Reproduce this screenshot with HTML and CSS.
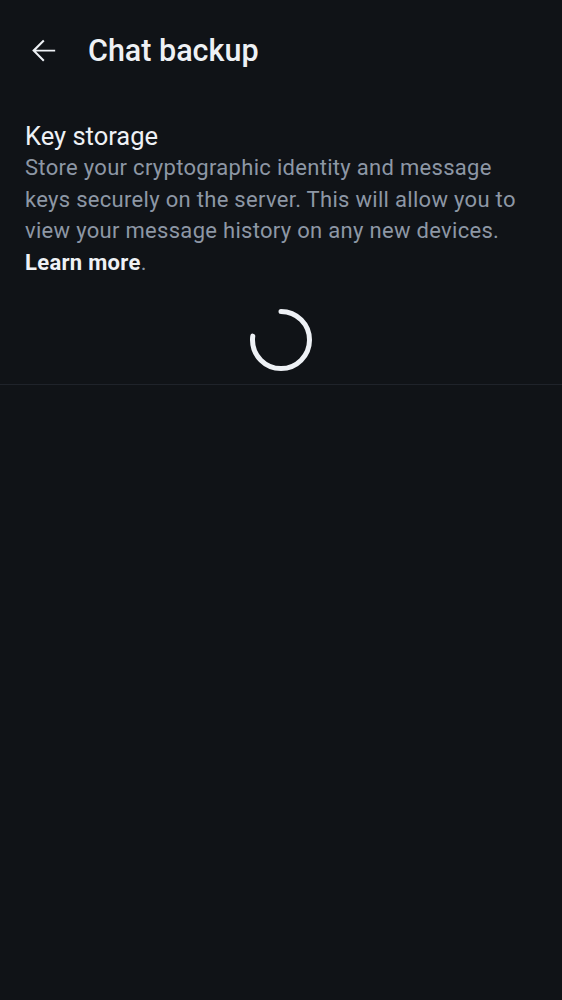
FILE: index.html
```html
<!DOCTYPE html>
<html>
<head>
<meta charset="utf-8">
<link rel="stylesheet" href="styles.css">
</head>
<body>
<div class="app">
  <header class="topbar">
    <button class="back" aria-label="Back">
      <svg width="35" height="35" viewBox="0 0 24 24"><path d="M20 11.4H6.9l5.8-5.8-.98-.98L4.24 12l7.48 7.48.98-.98-5.8-5.8H20v-1.3z" fill="#eef1f5"/></svg>
    </button>
    <h1 class="title">Chat backup</h1>
  </header>
  <section class="section">
    <h2 class="heading">Key storage</h2>
    <p class="desc">Store your cryptographic identity and message keys securely on the server. This will allow you to view your message history on any new devices. <a class="link">Learn more</a>.</p>
    <div class="spinner-row">
      <svg class="spinner" width="68" height="68" viewBox="0 0 68 68">
        <circle cx="34" cy="34" r="28.5" fill="none" stroke="#eef1f5" stroke-width="5" stroke-linecap="round" stroke-dasharray="138 200" transform="rotate(-90 34 34)"/>
      </svg>
    </div>
  </section>
  <div class="divider"></div>
</div>
</body>
</html>
```
FILE: styles.css
```css
html, body {
  margin: 0;
  padding: 0;
  background: #101317;
}
body {
  font-family: Roboto, "Noto Sans", sans-serif;
  color: #eef1f5;
  width: 562px;
  height: 1000px;
}
.topbar {
  display: flex;
  align-items: center;
  height: 100px;
  padding-left: 26px;
}
.back {
  background: none;
  border: 0;
  padding: 0;
  width: 35px;
  height: 35px;
  display: flex;
  align-items: center;
  justify-content: center;
  margin-right: 27px;
}
.title {
  margin: 0;
  font-size: 30.5px;
  font-weight: 500;
  letter-spacing: 0;
  color: #eef1f5;
}
.section {
  padding: 20px 37px 0 25px;
}
.heading {
  margin: 0;
  font-size: 25.5px;
  font-weight: 400;
  line-height: 32px;
  color: #eef1f5;
}
.desc {
  margin: 0;
  font-size: 22px;
  line-height: 31.5px;
  color: #8d97a5;
  letter-spacing: 0.3px;
}
.link {
  color: #eef1f5;
  font-weight: 700;
}
.spinner-row {
  display: flex;
  justify-content: center;
  padding: 28px 0 10px;
  margin-right: -12px;
}
.divider {
  height: 1px;
  background: #1f232a;
}
```
